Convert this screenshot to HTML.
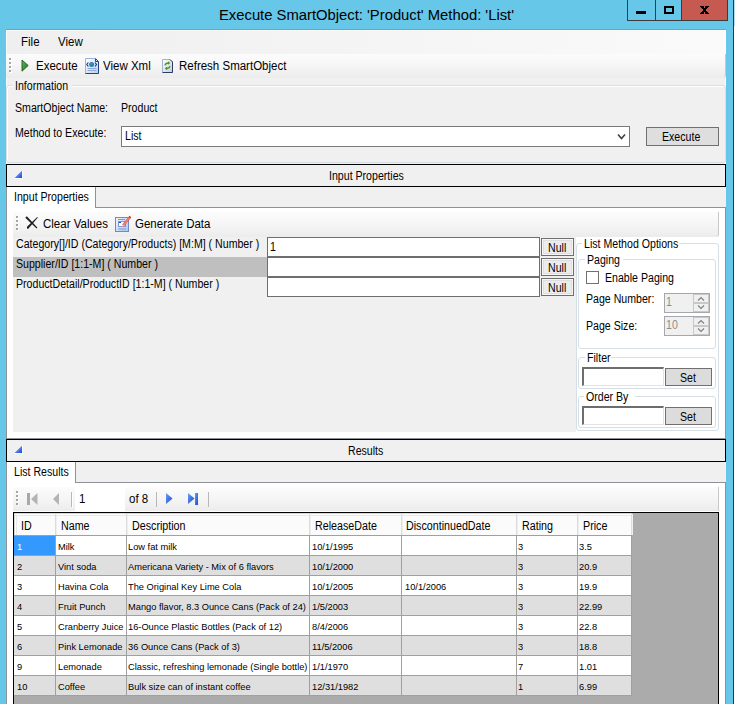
<!DOCTYPE html>
<html><head><meta charset="utf-8">
<style>
*{margin:0;padding:0;box-sizing:border-box}
html,body{width:735px;height:704px;overflow:hidden;background:#66c7e9;font-family:"Liberation Sans",sans-serif;color:#000}
.a{position:absolute}
.t{position:absolute;white-space:pre;line-height:1;color:#000;transform-origin:0 0}
svg{position:absolute;overflow:visible}
</style></head><body>

<div class="a" style="left:0px;top:0px;width:735px;height:704px;background:#66c7e9"></div>
<div class="a" style="left:733px;top:0px;width:1px;height:704px;background:#2d3a40"></div>
<div class="a" style="left:734px;top:26px;width:1px;height:678px;background:#f8f8f8"></div>
<div class="a" style="left:734px;top:0px;width:1px;height:26px;background:#b5d9e8"></div>
<div class="a" style="left:627px;top:0px;width:1px;height:21px;background:#3b3b3b"></div>
<div class="a" style="left:655px;top:0px;width:1px;height:21px;background:#3b3b3b"></div>
<div class="a" style="left:681px;top:0px;width:47px;height:21px;background:#c75a50"></div>
<div class="a" style="left:681px;top:0px;width:1px;height:21px;background:#3b3b3b"></div>
<div class="a" style="left:727px;top:0px;width:1px;height:21px;background:#3b3b3b"></div>
<div class="a" style="left:627px;top:20px;width:101px;height:1px;background:#3b3b3b"></div>
<div class="a" style="left:636px;top:11px;width:10px;height:3px;background:#000"></div>
<div class="a" style="left:664px;top:6px;width:10px;height:8px;border:2px solid #000"></div>
<div class="a" style="left:700px;top:6px;width:1px;height:1px;background:#000"></div>
<div class="a" style="left:701px;top:6px;width:1px;height:1px;background:#000"></div>
<div class="a" style="left:702px;top:6px;width:1px;height:1px;background:#000"></div>
<div class="a" style="left:703px;top:6px;width:1px;height:1px;background:#000"></div>
<div class="a" style="left:705px;top:6px;width:1px;height:1px;background:#000"></div>
<div class="a" style="left:706px;top:6px;width:1px;height:1px;background:#000"></div>
<div class="a" style="left:707px;top:6px;width:1px;height:1px;background:#000"></div>
<div class="a" style="left:708px;top:6px;width:1px;height:1px;background:#000"></div>
<div class="a" style="left:701px;top:7px;width:1px;height:1px;background:#000"></div>
<div class="a" style="left:702px;top:7px;width:1px;height:1px;background:#000"></div>
<div class="a" style="left:703px;top:7px;width:1px;height:1px;background:#000"></div>
<div class="a" style="left:705px;top:7px;width:1px;height:1px;background:#000"></div>
<div class="a" style="left:706px;top:7px;width:1px;height:1px;background:#000"></div>
<div class="a" style="left:707px;top:7px;width:1px;height:1px;background:#000"></div>
<div class="a" style="left:702px;top:8px;width:1px;height:1px;background:#000"></div>
<div class="a" style="left:703px;top:8px;width:1px;height:1px;background:#000"></div>
<div class="a" style="left:704px;top:8px;width:1px;height:1px;background:#000"></div>
<div class="a" style="left:705px;top:8px;width:1px;height:1px;background:#000"></div>
<div class="a" style="left:706px;top:8px;width:1px;height:1px;background:#000"></div>
<div class="a" style="left:703px;top:9px;width:1px;height:1px;background:#000"></div>
<div class="a" style="left:704px;top:9px;width:1px;height:1px;background:#000"></div>
<div class="a" style="left:705px;top:9px;width:1px;height:1px;background:#000"></div>
<div class="a" style="left:703px;top:10px;width:1px;height:1px;background:#000"></div>
<div class="a" style="left:704px;top:10px;width:1px;height:1px;background:#000"></div>
<div class="a" style="left:705px;top:10px;width:1px;height:1px;background:#000"></div>
<div class="a" style="left:702px;top:11px;width:1px;height:1px;background:#000"></div>
<div class="a" style="left:703px;top:11px;width:1px;height:1px;background:#000"></div>
<div class="a" style="left:704px;top:11px;width:1px;height:1px;background:#000"></div>
<div class="a" style="left:705px;top:11px;width:1px;height:1px;background:#000"></div>
<div class="a" style="left:706px;top:11px;width:1px;height:1px;background:#000"></div>
<div class="a" style="left:701px;top:12px;width:1px;height:1px;background:#000"></div>
<div class="a" style="left:702px;top:12px;width:1px;height:1px;background:#000"></div>
<div class="a" style="left:703px;top:12px;width:1px;height:1px;background:#000"></div>
<div class="a" style="left:705px;top:12px;width:1px;height:1px;background:#000"></div>
<div class="a" style="left:706px;top:12px;width:1px;height:1px;background:#000"></div>
<div class="a" style="left:707px;top:12px;width:1px;height:1px;background:#000"></div>
<div class="a" style="left:700px;top:13px;width:1px;height:1px;background:#000"></div>
<div class="a" style="left:701px;top:13px;width:1px;height:1px;background:#000"></div>
<div class="a" style="left:702px;top:13px;width:1px;height:1px;background:#000"></div>
<div class="a" style="left:703px;top:13px;width:1px;height:1px;background:#000"></div>
<div class="a" style="left:705px;top:13px;width:1px;height:1px;background:#000"></div>
<div class="a" style="left:706px;top:13px;width:1px;height:1px;background:#000"></div>
<div class="a" style="left:707px;top:13px;width:1px;height:1px;background:#000"></div>
<div class="a" style="left:708px;top:13px;width:1px;height:1px;background:#000"></div>
<div class="t" style="left:219.40px;top:7.05px;font-size:15.3px;transform:scaleX(0.9673);">Execute SmartObject: &#x27;Product&#x27; Method: &#x27;List&#x27;</div>
<div class="a" style="left:6px;top:30px;width:720px;height:674px;background:#f0f0f0"></div>
<div class="a" style="left:6px;top:29px;width:720px;height:1px;background:#67a6c6"></div>
<div class="a" style="left:6px;top:30px;width:720px;height:24px;background:linear-gradient(to right,#efefef,#fafafa)"></div>
<div class="t" style="left:20.70px;top:36.42px;font-size:12.5px;transform:scaleX(0.9200);">File</div>
<div class="t" style="left:58.20px;top:36.42px;font-size:12.5px;transform:scaleX(0.9200);">View</div>
<div class="a" style="left:6px;top:30px;width:720px;height:1px;background:#fbf8f8"></div>
<div class="a" style="left:6px;top:30px;width:1px;height:674px;background:#fbf8f8"></div>
<div class="a" style="left:725px;top:30px;width:1px;height:674px;background:#fdfdfd"></div>
<div class="a" style="left:6px;top:54px;width:720px;height:24px;background:linear-gradient(#fcfcfc,#f7f7f7 40%,#ececec);border-right:1px solid #c8c8c8;border-bottom-right-radius:3px"></div>
<div class="a" style="left:10px;top:59px;width:2px;height:2px;background:#fff"></div>
<div class="a" style="left:9px;top:58px;width:2px;height:2px;background:#a5a5a5"></div>
<div class="a" style="left:10px;top:63px;width:2px;height:2px;background:#fff"></div>
<div class="a" style="left:9px;top:62px;width:2px;height:2px;background:#a5a5a5"></div>
<div class="a" style="left:10px;top:67px;width:2px;height:2px;background:#fff"></div>
<div class="a" style="left:9px;top:66px;width:2px;height:2px;background:#a5a5a5"></div>
<div class="a" style="left:10px;top:71px;width:2px;height:2px;background:#fff"></div>
<div class="a" style="left:9px;top:70px;width:2px;height:2px;background:#a5a5a5"></div>
<svg style="left:21px;top:59px" width="9" height="14" viewBox="0 0 9 14"><defs><linearGradient id="gp" x1="0" y1="0" x2="1" y2="1"><stop offset="0" stop-color="#6cb46c"/><stop offset="1" stop-color="#1a741a"/></linearGradient></defs><path d="M1 1 L7.2 6.5 L1 12.2 Z" fill="url(#gp)" stroke="#166016" stroke-width="0.9"/></svg>
<div class="t" style="left:36.20px;top:60.42px;font-size:12.5px;transform:scaleX(0.9200);">Execute</div>
<svg style="left:85px;top:58px" width="15" height="16" viewBox="0 0 15 16">
<defs><linearGradient id="gvx" x1="0" y1="0" x2="1" y2="1"><stop offset="0" stop-color="#ffffff"/><stop offset="1" stop-color="#b9cff2"/></linearGradient></defs>
<path d="M0.5 0.5 H10.5 L13.5 3.5 V15.5 H0.5 Z" fill="url(#gvx)" stroke="#9fb4d6"/>
<path d="M13.5 3.5 V15.5 H0.5" fill="none" stroke="#27436f" stroke-width="1"/>
<path d="M10.5 0.5 L13.5 3.5 M10.5 1 V3.5 H13" fill="none" stroke="#27436f" stroke-width="1"/>
<path d="M2.5 10.5 H11.5 M2.5 12.5 H11.5" stroke="#8fa9d4" stroke-width="1"/>
<circle cx="6.6" cy="6.5" r="2.5" fill="#2a78d8"/><path d="M5 5 Q6.5 4 8 5.5 Q7 7 5.5 7.5 Z" fill="#30b040"/>
<path d="M3.3 4.5 L1.8 6.5 L3.3 8.5 M10 4.5 L11.5 6.5 L10 8.5" stroke="#13348a" stroke-width="1.1" fill="none"/>
</svg>
<div class="t" style="left:102.70px;top:60.42px;font-size:12.5px;transform:scaleX(0.9200);">View Xml</div>
<svg style="left:162px;top:59px" width="12" height="15" viewBox="0 0 12 15">
<defs><linearGradient id="grf" x1="0" y1="0" x2="1" y2="1"><stop offset="0" stop-color="#ffffff"/><stop offset="1" stop-color="#c4cde6"/></linearGradient></defs>
<path d="M0.5 0.5 H8 L10.5 3 V13.5 H0.5 Z" fill="url(#grf)" stroke="#a7b4c8"/>
<path d="M10.5 3 V13.5 H0.5" fill="none" stroke="#2b3e62"/>
<path d="M8 0.5 L10.5 3" fill="none" stroke="#2b3e62"/>
<path d="M3 6.3 Q3.5 4 6.5 4" stroke="#4a9a1a" stroke-width="1.3" fill="none"/><path d="M6 2.3 L8.3 4 L6 5.7 Z" fill="#4a9a1a"/>
<path d="M8 7.2 Q7.5 9.5 4.5 9.5" stroke="#4a9a1a" stroke-width="1.3" fill="none"/><path d="M5 7.8 L2.7 9.5 L5 11.2 Z" fill="#4a9a1a"/>
</svg>
<div class="t" style="left:179.40px;top:60.42px;font-size:12.5px;transform:scaleX(0.9200);">Refresh SmartObject</div>
<div class="a" style="left:6px;top:85px;width:720px;height:78px;border:1px solid #d5dfe5;border-radius:3px;box-shadow:inset 1px 1px 0 #fff"></div>
<div class="a" style="left:13px;top:80px;width:59px;height:13px;background:#f0f0f0"></div>
<div class="t" style="left:14.80px;top:79.84px;font-size:12.0px;transform:scaleX(0.8833);">Information</div>
<div class="t" style="left:14.80px;top:101.84px;font-size:12.0px;transform:scaleX(0.8833);">SmartObject Name:</div>
<div class="t" style="left:120.80px;top:101.84px;font-size:12.0px;transform:scaleX(0.8833);">Product</div>
<div class="t" style="left:14.80px;top:126.84px;font-size:12.0px;transform:scaleX(0.8833);">Method to Execute:</div>
<div class="a" style="left:121px;top:126px;width:509px;height:21px;background:#fff;border:1px solid #7a7a7a"></div>
<div class="t" style="left:124.80px;top:129.84px;font-size:12.0px;transform:scaleX(0.8833);">List</div>
<svg style="left:617px;top:133px" width="9" height="8" viewBox="0 0 9 8"><path d="M1 1.5 L4.5 5.5 L8 1.5" stroke="#404040" stroke-width="1.6" fill="none"/></svg>
<div class="a" style="left:646px;top:127px;width:73px;height:19px;background:#dedede;border:1px solid #707070"></div>
<div class="t" style="left:662.20px;top:130.84px;font-size:12.0px;transform:scaleX(0.8833);">Execute</div>
<div class="a" style="left:6px;top:164px;width:720px;height:23px;background:#f0f0f0;border:1px solid #000"></div>
<svg style="left:14px;top:170px" width="9" height="9" viewBox="0 0 9 9"><defs><linearGradient id="gt164" x1="0" y1="0" x2="1" y2="1"><stop offset="0" stop-color="#9cc8ff"/><stop offset="1" stop-color="#1840e0"/></linearGradient></defs><path d="M8 0.7 V8 H0.5 Z" fill="url(#gt164)"/><path d="M8.5 0.5 V8.5 H0.5" stroke="#fff" stroke-width="1" fill="none" opacity="0.8"/></svg>
<div class="t" style="left:328.50px;top:169.84px;font-size:12.0px;transform:scaleX(0.8833);">Input Properties</div>
<div class="a" style="left:6px;top:187px;width:720px;height:21px;background:#f0f0f0"></div>
<div class="a" style="left:6px;top:207px;width:720px;height:1px;background:#8e9198"></div>
<div class="a" style="left:6px;top:187px;width:90px;height:22px;background:#fff;border-right:1px solid #8e9198;border-left:1px solid #8e9198"></div>
<div class="a" style="left:6px;top:208px;width:720px;height:231px;background:#fff;border:1px solid #8e9198;border-top:none"></div>
<div class="a" style="left:7px;top:207px;width:88px;height:2px;background:#fff"></div>
<div class="t" style="left:14.30px;top:190.84px;font-size:12.0px;transform:scaleX(0.8833);">Input Properties</div>
<div class="a" style="left:13px;top:212px;width:706px;height:25px;background:linear-gradient(#fcfcfc,#f5f5f5 50%,#ececec);border-right:1px solid #c8c8c8;border-bottom-right-radius:3px"></div>
<div class="a" style="left:17px;top:217px;width:2px;height:2px;background:#fff"></div>
<div class="a" style="left:16px;top:216px;width:2px;height:2px;background:#a5a5a5"></div>
<div class="a" style="left:17px;top:221px;width:2px;height:2px;background:#fff"></div>
<div class="a" style="left:16px;top:220px;width:2px;height:2px;background:#a5a5a5"></div>
<div class="a" style="left:17px;top:225px;width:2px;height:2px;background:#fff"></div>
<div class="a" style="left:16px;top:224px;width:2px;height:2px;background:#a5a5a5"></div>
<div class="a" style="left:17px;top:229px;width:2px;height:2px;background:#fff"></div>
<div class="a" style="left:16px;top:228px;width:2px;height:2px;background:#a5a5a5"></div>
<svg style="left:25px;top:216px" width="14" height="14" viewBox="0 0 14 14"><path d="M0.3 1.8 L1.8 0.3 L12.3 11.6 L11.6 12.4 Z" fill="#1e1e1e"/><path d="M12.9 1.6 L12.3 1 L2 10.8 Q1.6 12.3 2.6 12.9 Q3.4 12.8 3.9 11.9 Z" fill="#1e1e1e"/></svg>
<div class="t" style="left:43.10px;top:218.42px;font-size:12.5px;transform:scaleX(0.9200);">Clear Values</div>
<svg style="left:115px;top:215px" width="16" height="18" viewBox="0 0 16 18">
<defs><linearGradient id="ggd" x1="0" y1="0" x2="1" y2="1"><stop offset="0" stop-color="#f4f8ff"/><stop offset="1" stop-color="#a8c4ee"/></linearGradient></defs>
<rect x="0.5" y="2.5" width="13" height="14" fill="url(#ggd)" stroke="#7388c4"/>
<path d="M3 4.5 H10" stroke="#7e96d2"/>
<rect x="3.5" y="6.5" width="7" height="5" fill="#fff" stroke="#7e96d2"/>
<rect x="4" y="7" width="2" height="1" fill="#1a3cff"/>
<path d="M3 14 H11" stroke="#7e96d2"/>
<path d="M7.4 9.6 L13.6 2 L15.2 3.5 L9 11 Z" fill="#f47c70" stroke="#c84030" stroke-width="0.4"/>
<path d="M7.4 9.6 L9 11 L6.2 11.8 Z" fill="#f4dcc0"/><path d="M6.2 11.8 L7 10.9 L7.4 11.4 Z" fill="#803020"/>
<path d="M13.6 2 L14.6 0.8 L16.2 2.3 L15.2 3.5 Z" fill="#d83010"/>
</svg>
<div class="t" style="left:134.70px;top:218.42px;font-size:12.5px;transform:scaleX(0.9200);">Generate Data</div>
<div class="a" style="left:13px;top:237px;width:563px;height:195px;background:#f0f0f0"></div>
<div class="a" style="left:13px;top:257px;width:254px;height:20px;background:#bfbfbf"></div>
<div class="t" style="left:15.80px;top:237.84px;font-size:12.0px;transform:scaleX(0.8833);">Category[]/ID (Category/Products) [M:M] ( Number )</div>
<div class="t" style="left:15.80px;top:257.84px;font-size:12.0px;transform:scaleX(0.8833);">Supplier/ID [1:1-M] ( Number )</div>
<div class="t" style="left:15.80px;top:277.84px;font-size:12.0px;transform:scaleX(0.8833);">ProductDetail/ProductID [1:1-M] ( Number )</div>
<div class="a" style="left:267px;top:237px;width:273px;height:20px;background:#fff;border:1px solid #6e6e6e"></div>
<div class="a" style="left:541px;top:238px;width:33px;height:18px;background:#ececec;border:1px solid #6e6e6e;box-shadow:inset 0 0 0 1px #f6f6f6,inset 0 0 0 2px #dedede"></div>
<div class="t" style="left:548.20px;top:241.84px;font-size:12.0px;transform:scaleX(0.8833);">Null</div>
<div class="a" style="left:267px;top:257px;width:273px;height:20px;background:#fff;border:1px solid #6e6e6e"></div>
<div class="a" style="left:541px;top:258px;width:33px;height:18px;background:#ececec;border:1px solid #6e6e6e;box-shadow:inset 0 0 0 1px #f6f6f6,inset 0 0 0 2px #dedede"></div>
<div class="t" style="left:548.20px;top:261.84px;font-size:12.0px;transform:scaleX(0.8833);">Null</div>
<div class="a" style="left:267px;top:277px;width:273px;height:20px;background:#fff;border:1px solid #6e6e6e"></div>
<div class="a" style="left:541px;top:278px;width:33px;height:18px;background:#ececec;border:1px solid #6e6e6e;box-shadow:inset 0 0 0 1px #f6f6f6,inset 0 0 0 2px #dedede"></div>
<div class="t" style="left:548.20px;top:281.84px;font-size:12.0px;transform:scaleX(0.8833);">Null</div>
<div class="t" style="left:270.30px;top:240.84px;font-size:12.0px;transform:scaleX(0.8833);">1</div>
<div class="a" style="left:576px;top:243px;width:143px;height:188px;border:1px solid #d5dfe5;border-radius:3px"></div>
<div class="a" style="left:582px;top:238px;width:97px;height:13px;background:#fff"></div>
<div class="t" style="left:584.30px;top:237.84px;font-size:12.0px;transform:scaleX(0.8833);">List Method Options</div>
<div class="a" style="left:578px;top:259px;width:138px;height:90px;border:1px solid #d5dfe5;border-radius:3px"></div>
<div class="a" style="left:585px;top:254px;width:38px;height:12px;background:#fff"></div>
<div class="t" style="left:587.40px;top:254.34px;font-size:12.0px;transform:scaleX(0.8833);">Paging</div>
<div class="a" style="left:586px;top:271px;width:13px;height:13px;background:#fff;border:1px solid #707070"></div>
<div class="t" style="left:605.40px;top:272.34px;font-size:12.0px;transform:scaleX(0.8833);">Enable Paging</div>
<div class="t" style="left:585.80px;top:293.34px;font-size:12.0px;transform:scaleX(0.8833);">Page Number:</div>
<div class="t" style="left:585.80px;top:319.84px;font-size:12.0px;transform:scaleX(0.8833);">Page Size:</div>
<div class="a" style="left:664px;top:293px;width:46px;height:20px;background:#f0f0f0;border:1px solid #a4a7ad"></div>
<div class="a" style="left:693px;top:294px;width:16px;height:9px;background:#f0f0f0;border:1px solid #c8c8c8"></div>
<div class="a" style="left:693px;top:303px;width:16px;height:9px;background:#f0f0f0;border:1px solid #c8c8c8"></div>
<svg style="left:697px;top:296px" width="8" height="14" viewBox="0 0 8 14"><path d="M1 4.5 L4 1.5 L7 4.5 M1 9.5 L4 12.5 L7 9.5" stroke="#808080" stroke-width="1.2" fill="none"/></svg>
<div class="t" style="left:666.30px;top:296.34px;font-size:12.0px;transform:scaleX(0.8833);color:#8d8d8d">1</div>
<div class="a" style="left:664px;top:316px;width:46px;height:20px;background:#f0f0f0;border:1px solid #a4a7ad"></div>
<div class="a" style="left:693px;top:317px;width:16px;height:9px;background:#f0f0f0;border:1px solid #c8c8c8"></div>
<div class="a" style="left:693px;top:326px;width:16px;height:9px;background:#f0f0f0;border:1px solid #c8c8c8"></div>
<svg style="left:697px;top:319px" width="8" height="14" viewBox="0 0 8 14"><path d="M1 4.5 L4 1.5 L7 4.5 M1 9.5 L4 12.5 L7 9.5" stroke="#808080" stroke-width="1.2" fill="none"/></svg>
<div class="t" style="left:666.30px;top:319.34px;font-size:12.0px;transform:scaleX(0.8833);color:#8d8d8d">10</div>
<div class="a" style="left:578px;top:357px;width:138px;height:32px;border:1px solid #d5dfe5;border-radius:3px"></div>
<div class="a" style="left:585px;top:352px;width:26px;height:12px;background:#fff"></div>
<div class="t" style="left:587.20px;top:351.84px;font-size:12.0px;transform:scaleX(0.8833);">Filter</div>
<div class="a" style="left:582px;top:367px;width:82px;height:19px;background:#fff;border-top:2px solid #6d6d6d;border-left:2px solid #6d6d6d;border-right:1px solid #e3e3e3;border-bottom:1px solid #e3e3e3"></div>
<div class="a" style="left:665px;top:368px;width:47px;height:18px;background:#dcdcdc;border:1px solid #707070"></div>
<div class="t" style="left:679.80px;top:371.84px;font-size:12.0px;transform:scaleX(0.8833);">Set</div>
<div class="a" style="left:578px;top:396px;width:138px;height:32px;border:1px solid #d5dfe5;border-radius:3px"></div>
<div class="a" style="left:584px;top:391px;width:51px;height:12px;background:#fff"></div>
<div class="t" style="left:586.10px;top:390.84px;font-size:12.0px;transform:scaleX(0.8833);">Order By</div>
<div class="a" style="left:582px;top:406px;width:82px;height:19px;background:#fff;border-top:2px solid #6d6d6d;border-left:2px solid #6d6d6d;border-right:1px solid #e3e3e3;border-bottom:1px solid #e3e3e3"></div>
<div class="a" style="left:665px;top:407px;width:47px;height:18px;background:#dcdcdc;border:1px solid #707070"></div>
<div class="t" style="left:679.80px;top:410.84px;font-size:12.0px;transform:scaleX(0.8833);">Set</div>
<div class="a" style="left:6px;top:439px;width:720px;height:23px;background:#f0f0f0;border:1px solid #000"></div>
<svg style="left:14px;top:445px" width="9" height="9" viewBox="0 0 9 9"><defs><linearGradient id="gt439" x1="0" y1="0" x2="1" y2="1"><stop offset="0" stop-color="#9cc8ff"/><stop offset="1" stop-color="#1840e0"/></linearGradient></defs><path d="M8 0.7 V8 H0.5 Z" fill="url(#gt439)"/><path d="M8.5 0.5 V8.5 H0.5" stroke="#fff" stroke-width="1" fill="none" opacity="0.8"/></svg>
<div class="t" style="left:348.10px;top:444.84px;font-size:12.0px;transform:scaleX(0.8833);">Results</div>
<div class="a" style="left:6px;top:462px;width:720px;height:21px;background:#f0f0f0"></div>
<div class="a" style="left:6px;top:482px;width:720px;height:1px;background:#8e9198"></div>
<div class="a" style="left:6px;top:462px;width:70px;height:22px;background:#fff;border-right:1px solid #8e9198;border-left:1px solid #8e9198"></div>
<div class="a" style="left:6px;top:483px;width:720px;height:238px;background:#fff;border:1px solid #8e9198;border-top:none"></div>
<div class="a" style="left:7px;top:482px;width:68px;height:2px;background:#fff"></div>
<div class="t" style="left:14.30px;top:465.84px;font-size:12.0px;transform:scaleX(0.8833);">List Results</div>
<div class="a" style="left:13px;top:487px;width:706px;height:24px;background:linear-gradient(#fcfcfc,#f5f5f5 50%,#ececec);border-right:1px solid #c8c8c8"></div>
<div class="a" style="left:17px;top:492px;width:2px;height:2px;background:#fff"></div>
<div class="a" style="left:16px;top:491px;width:2px;height:2px;background:#a5a5a5"></div>
<div class="a" style="left:17px;top:496px;width:2px;height:2px;background:#fff"></div>
<div class="a" style="left:16px;top:495px;width:2px;height:2px;background:#a5a5a5"></div>
<div class="a" style="left:17px;top:500px;width:2px;height:2px;background:#fff"></div>
<div class="a" style="left:16px;top:499px;width:2px;height:2px;background:#a5a5a5"></div>
<div class="a" style="left:17px;top:504px;width:2px;height:2px;background:#fff"></div>
<div class="a" style="left:16px;top:503px;width:2px;height:2px;background:#a5a5a5"></div>
<svg style="left:27px;top:493px" width="11" height="12" viewBox="0 0 11 12"><rect x="0" y="0" width="3" height="12" fill="#a8a8a8"/><path d="M10.5 0 V12 L4 6 Z" fill="#b4b4b4"/></svg>
<svg style="left:53px;top:493px" width="7" height="12" viewBox="0 0 7 12"><path d="M6 0 V12 L0 6 Z" fill="#b4b4b4"/></svg>
<div class="a" style="left:71px;top:492px;width:1px;height:15px;background:#b8b8b8"></div>
<div class="a" style="left:72px;top:493px;width:1px;height:15px;background:#fff"></div>
<div class="a" style="left:75px;top:487px;width:50px;height:24px;background:#fff"></div>
<div class="t" style="left:78.70px;top:493.42px;font-size:12.5px;transform:scaleX(0.9200);">1</div>
<div class="t" style="left:129.00px;top:493.42px;font-size:12.5px;transform:scaleX(0.9200);">of 8</div>
<div class="a" style="left:156px;top:492px;width:1px;height:15px;background:#b8b8b8"></div>
<svg style="left:166px;top:493px" width="8" height="11" viewBox="0 0 8 11"><defs><linearGradient id="gnx" x1="0" y1="0" x2="1" y2="1"><stop offset="0" stop-color="#6aa0f8"/><stop offset="1" stop-color="#1848d0"/></linearGradient></defs><path d="M0 0 L6.5 5.5 L0 11 Z" fill="url(#gnx)"/></svg>
<svg style="left:188px;top:493px" width="11" height="13" viewBox="0 0 11 13"><path d="M0 0 L6.5 5.5 L0 11 Z" fill="url(#gnx)"/><rect x="7" y="0" width="3" height="12" fill="url(#gnx)"/></svg>
<div class="a" style="left:208px;top:492px;width:1px;height:15px;background:#b8b8b8"></div>
<div class="a" style="left:13px;top:512px;width:706px;height:192px;background:#ababab"></div>
<div class="a" style="left:13px;top:512px;width:706px;height:1px;background:#000"></div>
<div class="a" style="left:13px;top:512px;width:1px;height:192px;background:#000"></div>
<div class="a" style="left:718px;top:512px;width:1px;height:192px;background:#000"></div>
<div class="a" style="left:14px;top:513px;width:618px;height:22px;background:#fbfbfb"></div>
<div class="a" style="left:14px;top:513px;width:618px;height:1px;background:#d8d8d8"></div>
<div class="a" style="left:14px;top:513px;width:1px;height:22px;background:#d8d8d8"></div>
<div class="a" style="left:15px;top:514px;width:617px;height:1px;background:#ffffff"></div>
<div class="a" style="left:15px;top:515px;width:617px;height:1px;background:#e9e9e9"></div>
<div class="a" style="left:16px;top:515px;width:1px;height:20px;background:#e9e9e9"></div>
<div class="a" style="left:55px;top:514px;width:1px;height:21px;background:#dcdcdc"></div>
<div class="a" style="left:56px;top:514px;width:1px;height:21px;background:#efefef"></div>
<div class="t" style="left:20.60px;top:519.84px;font-size:12.0px;transform:scaleX(0.8917);">ID</div>
<div class="a" style="left:126px;top:514px;width:1px;height:21px;background:#dcdcdc"></div>
<div class="a" style="left:127px;top:514px;width:1px;height:21px;background:#efefef"></div>
<div class="t" style="left:61.30px;top:519.84px;font-size:12.0px;transform:scaleX(0.8917);">Name</div>
<div class="a" style="left:309px;top:514px;width:1px;height:21px;background:#dcdcdc"></div>
<div class="a" style="left:310px;top:514px;width:1px;height:21px;background:#efefef"></div>
<div class="t" style="left:131.60px;top:519.84px;font-size:12.0px;transform:scaleX(0.8917);">Description</div>
<div class="a" style="left:401px;top:514px;width:1px;height:21px;background:#dcdcdc"></div>
<div class="a" style="left:402px;top:514px;width:1px;height:21px;background:#efefef"></div>
<div class="t" style="left:315.20px;top:519.84px;font-size:12.0px;transform:scaleX(0.8917);">ReleaseDate</div>
<div class="a" style="left:516px;top:514px;width:1px;height:21px;background:#dcdcdc"></div>
<div class="a" style="left:517px;top:514px;width:1px;height:21px;background:#efefef"></div>
<div class="t" style="left:406.20px;top:519.84px;font-size:12.0px;transform:scaleX(0.8917);">DiscontinuedDate</div>
<div class="a" style="left:577px;top:514px;width:1px;height:21px;background:#dcdcdc"></div>
<div class="a" style="left:578px;top:514px;width:1px;height:21px;background:#efefef"></div>
<div class="t" style="left:521.60px;top:519.84px;font-size:12.0px;transform:scaleX(0.8917);">Rating</div>
<div class="a" style="left:631px;top:514px;width:1px;height:21px;background:#dcdcdc"></div>
<div class="a" style="left:632px;top:514px;width:1px;height:21px;background:#efefef"></div>
<div class="t" style="left:582.90px;top:519.84px;font-size:12.0px;transform:scaleX(0.8917);">Price</div>
<div class="a" style="left:14px;top:535px;width:618px;height:1px;background:#a0a0a0"></div>
<div class="a" style="left:14px;top:536px;width:618px;height:19px;background:#fff"></div>
<div class="a" style="left:14px;top:536px;width:41px;height:19px;background:#3399ff"></div>
<div class="a" style="left:55px;top:536px;width:1px;height:20px;background:#a0a0a0"></div>
<div class="t" style="left:17.40px;top:541.62px;font-size:9.9px;transform:scaleX(0.9394);color:#fff">1</div>
<div class="a" style="left:126px;top:536px;width:1px;height:20px;background:#a0a0a0"></div>
<div class="t" style="left:57.80px;top:541.62px;font-size:9.9px;transform:scaleX(0.9394);color:#000">Milk</div>
<div class="a" style="left:309px;top:536px;width:1px;height:20px;background:#a0a0a0"></div>
<div class="t" style="left:128.40px;top:541.62px;font-size:9.9px;transform:scaleX(0.9394);color:#000">Low fat milk</div>
<div class="a" style="left:401px;top:536px;width:1px;height:20px;background:#a0a0a0"></div>
<div class="t" style="left:312.00px;top:541.62px;font-size:9.9px;transform:scaleX(0.9394);color:#000">10/1/1995</div>
<div class="a" style="left:516px;top:536px;width:1px;height:20px;background:#a0a0a0"></div>
<div class="a" style="left:577px;top:536px;width:1px;height:20px;background:#a0a0a0"></div>
<div class="t" style="left:518.20px;top:541.62px;font-size:9.9px;transform:scaleX(0.9394);color:#000">3</div>
<div class="a" style="left:631px;top:536px;width:1px;height:20px;background:#a0a0a0"></div>
<div class="t" style="left:579.00px;top:541.62px;font-size:9.9px;transform:scaleX(0.9394);color:#000">3.5</div>
<div class="a" style="left:14px;top:555px;width:618px;height:1px;background:#a0a0a0"></div>
<div class="a" style="left:14px;top:556px;width:618px;height:19px;background:#dfdfdf"></div>
<div class="a" style="left:55px;top:556px;width:1px;height:20px;background:#a0a0a0"></div>
<div class="t" style="left:17.40px;top:561.62px;font-size:9.9px;transform:scaleX(0.9394);color:#000">2</div>
<div class="a" style="left:126px;top:556px;width:1px;height:20px;background:#a0a0a0"></div>
<div class="t" style="left:57.80px;top:561.62px;font-size:9.9px;transform:scaleX(0.9394);color:#000">Vint soda</div>
<div class="a" style="left:309px;top:556px;width:1px;height:20px;background:#a0a0a0"></div>
<div class="t" style="left:128.40px;top:561.62px;font-size:9.9px;transform:scaleX(0.9394);color:#000">Americana Variety - Mix of 6 flavors</div>
<div class="a" style="left:401px;top:556px;width:1px;height:20px;background:#a0a0a0"></div>
<div class="t" style="left:312.00px;top:561.62px;font-size:9.9px;transform:scaleX(0.9394);color:#000">10/1/2000</div>
<div class="a" style="left:516px;top:556px;width:1px;height:20px;background:#a0a0a0"></div>
<div class="a" style="left:577px;top:556px;width:1px;height:20px;background:#a0a0a0"></div>
<div class="t" style="left:518.20px;top:561.62px;font-size:9.9px;transform:scaleX(0.9394);color:#000">3</div>
<div class="a" style="left:631px;top:556px;width:1px;height:20px;background:#a0a0a0"></div>
<div class="t" style="left:579.00px;top:561.62px;font-size:9.9px;transform:scaleX(0.9394);color:#000">20.9</div>
<div class="a" style="left:14px;top:575px;width:618px;height:1px;background:#a0a0a0"></div>
<div class="a" style="left:14px;top:576px;width:618px;height:19px;background:#fff"></div>
<div class="a" style="left:55px;top:576px;width:1px;height:20px;background:#a0a0a0"></div>
<div class="t" style="left:17.40px;top:581.62px;font-size:9.9px;transform:scaleX(0.9394);color:#000">3</div>
<div class="a" style="left:126px;top:576px;width:1px;height:20px;background:#a0a0a0"></div>
<div class="t" style="left:57.80px;top:581.62px;font-size:9.9px;transform:scaleX(0.9394);color:#000">Havina Cola</div>
<div class="a" style="left:309px;top:576px;width:1px;height:20px;background:#a0a0a0"></div>
<div class="t" style="left:128.40px;top:581.62px;font-size:9.9px;transform:scaleX(0.9394);color:#000">The Original Key Lime Cola</div>
<div class="a" style="left:401px;top:576px;width:1px;height:20px;background:#a0a0a0"></div>
<div class="t" style="left:312.00px;top:581.62px;font-size:9.9px;transform:scaleX(0.9394);color:#000">10/1/2005</div>
<div class="a" style="left:516px;top:576px;width:1px;height:20px;background:#a0a0a0"></div>
<div class="t" style="left:404.70px;top:581.62px;font-size:9.9px;transform:scaleX(0.9394);color:#000">10/1/2006</div>
<div class="a" style="left:577px;top:576px;width:1px;height:20px;background:#a0a0a0"></div>
<div class="t" style="left:518.20px;top:581.62px;font-size:9.9px;transform:scaleX(0.9394);color:#000">3</div>
<div class="a" style="left:631px;top:576px;width:1px;height:20px;background:#a0a0a0"></div>
<div class="t" style="left:579.00px;top:581.62px;font-size:9.9px;transform:scaleX(0.9394);color:#000">19.9</div>
<div class="a" style="left:14px;top:595px;width:618px;height:1px;background:#a0a0a0"></div>
<div class="a" style="left:14px;top:596px;width:618px;height:19px;background:#dfdfdf"></div>
<div class="a" style="left:55px;top:596px;width:1px;height:20px;background:#a0a0a0"></div>
<div class="t" style="left:17.40px;top:601.62px;font-size:9.9px;transform:scaleX(0.9394);color:#000">4</div>
<div class="a" style="left:126px;top:596px;width:1px;height:20px;background:#a0a0a0"></div>
<div class="t" style="left:57.80px;top:601.62px;font-size:9.9px;transform:scaleX(0.9394);color:#000">Fruit Punch</div>
<div class="a" style="left:309px;top:596px;width:1px;height:20px;background:#a0a0a0"></div>
<div class="t" style="left:128.40px;top:601.62px;font-size:9.9px;transform:scaleX(0.9394);color:#000">Mango flavor, 8.3 Ounce Cans (Pack of 24)</div>
<div class="a" style="left:401px;top:596px;width:1px;height:20px;background:#a0a0a0"></div>
<div class="t" style="left:312.00px;top:601.62px;font-size:9.9px;transform:scaleX(0.9394);color:#000">1/5/2003</div>
<div class="a" style="left:516px;top:596px;width:1px;height:20px;background:#a0a0a0"></div>
<div class="a" style="left:577px;top:596px;width:1px;height:20px;background:#a0a0a0"></div>
<div class="t" style="left:518.20px;top:601.62px;font-size:9.9px;transform:scaleX(0.9394);color:#000">3</div>
<div class="a" style="left:631px;top:596px;width:1px;height:20px;background:#a0a0a0"></div>
<div class="t" style="left:579.00px;top:601.62px;font-size:9.9px;transform:scaleX(0.9394);color:#000">22.99</div>
<div class="a" style="left:14px;top:615px;width:618px;height:1px;background:#a0a0a0"></div>
<div class="a" style="left:14px;top:616px;width:618px;height:19px;background:#fff"></div>
<div class="a" style="left:55px;top:616px;width:1px;height:20px;background:#a0a0a0"></div>
<div class="t" style="left:17.40px;top:621.62px;font-size:9.9px;transform:scaleX(0.9394);color:#000">5</div>
<div class="a" style="left:126px;top:616px;width:1px;height:20px;background:#a0a0a0"></div>
<div class="t" style="left:57.80px;top:621.62px;font-size:9.9px;transform:scaleX(0.9394);color:#000">Cranberry Juice</div>
<div class="a" style="left:309px;top:616px;width:1px;height:20px;background:#a0a0a0"></div>
<div class="t" style="left:128.40px;top:621.62px;font-size:9.9px;transform:scaleX(0.9394);color:#000">16-Ounce Plastic Bottles (Pack of 12)</div>
<div class="a" style="left:401px;top:616px;width:1px;height:20px;background:#a0a0a0"></div>
<div class="t" style="left:312.00px;top:621.62px;font-size:9.9px;transform:scaleX(0.9394);color:#000">8/4/2006</div>
<div class="a" style="left:516px;top:616px;width:1px;height:20px;background:#a0a0a0"></div>
<div class="a" style="left:577px;top:616px;width:1px;height:20px;background:#a0a0a0"></div>
<div class="t" style="left:518.20px;top:621.62px;font-size:9.9px;transform:scaleX(0.9394);color:#000">3</div>
<div class="a" style="left:631px;top:616px;width:1px;height:20px;background:#a0a0a0"></div>
<div class="t" style="left:579.00px;top:621.62px;font-size:9.9px;transform:scaleX(0.9394);color:#000">22.8</div>
<div class="a" style="left:14px;top:635px;width:618px;height:1px;background:#a0a0a0"></div>
<div class="a" style="left:14px;top:636px;width:618px;height:19px;background:#dfdfdf"></div>
<div class="a" style="left:55px;top:636px;width:1px;height:20px;background:#a0a0a0"></div>
<div class="t" style="left:17.40px;top:641.62px;font-size:9.9px;transform:scaleX(0.9394);color:#000">6</div>
<div class="a" style="left:126px;top:636px;width:1px;height:20px;background:#a0a0a0"></div>
<div class="t" style="left:57.80px;top:641.62px;font-size:9.9px;transform:scaleX(0.9394);color:#000">Pink Lemonade</div>
<div class="a" style="left:309px;top:636px;width:1px;height:20px;background:#a0a0a0"></div>
<div class="t" style="left:128.40px;top:641.62px;font-size:9.9px;transform:scaleX(0.9394);color:#000">36 Ounce Cans (Pack of 3)</div>
<div class="a" style="left:401px;top:636px;width:1px;height:20px;background:#a0a0a0"></div>
<div class="t" style="left:312.00px;top:641.62px;font-size:9.9px;transform:scaleX(0.9394);color:#000">11/5/2006</div>
<div class="a" style="left:516px;top:636px;width:1px;height:20px;background:#a0a0a0"></div>
<div class="a" style="left:577px;top:636px;width:1px;height:20px;background:#a0a0a0"></div>
<div class="t" style="left:518.20px;top:641.62px;font-size:9.9px;transform:scaleX(0.9394);color:#000">3</div>
<div class="a" style="left:631px;top:636px;width:1px;height:20px;background:#a0a0a0"></div>
<div class="t" style="left:579.00px;top:641.62px;font-size:9.9px;transform:scaleX(0.9394);color:#000">18.8</div>
<div class="a" style="left:14px;top:655px;width:618px;height:1px;background:#a0a0a0"></div>
<div class="a" style="left:14px;top:656px;width:618px;height:19px;background:#fff"></div>
<div class="a" style="left:55px;top:656px;width:1px;height:20px;background:#a0a0a0"></div>
<div class="t" style="left:17.40px;top:661.62px;font-size:9.9px;transform:scaleX(0.9394);color:#000">9</div>
<div class="a" style="left:126px;top:656px;width:1px;height:20px;background:#a0a0a0"></div>
<div class="t" style="left:57.80px;top:661.62px;font-size:9.9px;transform:scaleX(0.9394);color:#000">Lemonade</div>
<div class="a" style="left:309px;top:656px;width:1px;height:20px;background:#a0a0a0"></div>
<div class="t" style="left:128.40px;top:661.62px;font-size:9.9px;transform:scaleX(0.9394);color:#000">Classic, refreshing lemonade (Single bottle)</div>
<div class="a" style="left:401px;top:656px;width:1px;height:20px;background:#a0a0a0"></div>
<div class="t" style="left:312.00px;top:661.62px;font-size:9.9px;transform:scaleX(0.9394);color:#000">1/1/1970</div>
<div class="a" style="left:516px;top:656px;width:1px;height:20px;background:#a0a0a0"></div>
<div class="a" style="left:577px;top:656px;width:1px;height:20px;background:#a0a0a0"></div>
<div class="t" style="left:518.20px;top:661.62px;font-size:9.9px;transform:scaleX(0.9394);color:#000">7</div>
<div class="a" style="left:631px;top:656px;width:1px;height:20px;background:#a0a0a0"></div>
<div class="t" style="left:579.00px;top:661.62px;font-size:9.9px;transform:scaleX(0.9394);color:#000">1.01</div>
<div class="a" style="left:14px;top:675px;width:618px;height:1px;background:#a0a0a0"></div>
<div class="a" style="left:14px;top:676px;width:618px;height:19px;background:#dfdfdf"></div>
<div class="a" style="left:55px;top:676px;width:1px;height:20px;background:#a0a0a0"></div>
<div class="t" style="left:17.40px;top:681.62px;font-size:9.9px;transform:scaleX(0.9394);color:#000">10</div>
<div class="a" style="left:126px;top:676px;width:1px;height:20px;background:#a0a0a0"></div>
<div class="t" style="left:57.80px;top:681.62px;font-size:9.9px;transform:scaleX(0.9394);color:#000">Coffee</div>
<div class="a" style="left:309px;top:676px;width:1px;height:20px;background:#a0a0a0"></div>
<div class="t" style="left:128.40px;top:681.62px;font-size:9.9px;transform:scaleX(0.9394);color:#000">Bulk size can of instant coffee</div>
<div class="a" style="left:401px;top:676px;width:1px;height:20px;background:#a0a0a0"></div>
<div class="t" style="left:312.00px;top:681.62px;font-size:9.9px;transform:scaleX(0.9394);color:#000">12/31/1982</div>
<div class="a" style="left:516px;top:676px;width:1px;height:20px;background:#a0a0a0"></div>
<div class="a" style="left:577px;top:676px;width:1px;height:20px;background:#a0a0a0"></div>
<div class="t" style="left:518.20px;top:681.62px;font-size:9.9px;transform:scaleX(0.9394);color:#000">1</div>
<div class="a" style="left:631px;top:676px;width:1px;height:20px;background:#a0a0a0"></div>
<div class="t" style="left:579.00px;top:681.62px;font-size:9.9px;transform:scaleX(0.9394);color:#000">6.99</div>
<div class="a" style="left:14px;top:695px;width:618px;height:1px;background:#a0a0a0"></div>
</body></html>
